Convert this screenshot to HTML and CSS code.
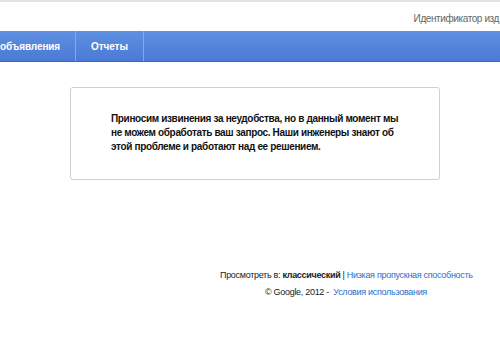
FILE: index.html
```html
<!DOCTYPE html>
<html lang="ru">
<head>
<meta charset="utf-8">
<link rel="stylesheet" href="styles.css">
</head>
<body>
<div class="page">
  <header class="top">
    <span class="pubid">Идентификатор изд</span>
  </header>
  <nav class="nav">
    <a class="nav-item first">объявления</a>
    <a class="nav-item">Отчеты</a>
  </nav>
  <main class="main">
    <div class="error-box">
      <p class="error-text">Приносим извинения за неудобства, но в данный момент мы<br>не можем обработать ваш запрос. Наши инженеры знают об<br>этой проблеме и работают над ее решением.</p>
    </div>
  </main>
  <footer class="footer">
    <div class="foot-line">Просмотреть в: <b>классический</b> | <a class="link">Низкая пропускная способность</a></div>
    <div class="foot-line">© Google, 2012 - &nbsp;<a class="link">Условия использования</a></div>
  </footer>
</div>
</body>
</html>
```
FILE: styles.css
```css
html, body {
  margin: 0;
  padding: 0;
  background: #fff;
}
body {
  width: 500px;
  height: 342px;
  overflow: hidden;
  font-family: "Liberation Sans", Arial, sans-serif;
}
.page {
  width: 500px;
}
.top {
  height: 31px;
  border-top: 2px solid #e3e3e3;
  box-sizing: border-box;
  display: flex;
  justify-content: flex-end;
  align-items: flex-start;
  padding-top: 11px;
}
.pubid {
  flex-shrink: 0;
  font-size: 10px;
  color: #666;
  line-height: 11px;
  letter-spacing: -0.4px;
  white-space: nowrap;
  margin-right: 1px;
}
.nav {
  height: 31px;
  box-sizing: border-box;
  background: linear-gradient(#5e90e2, #4a7ad4);
  border-bottom: 1px solid #3d68bd;
  display: flex;
}
.nav-item {
  display: flex;
  align-items: center;
  padding: 1px 15px 0;
  color: #fff;
  font-weight: bold;
  font-size: 10px;
  letter-spacing: -0.1px;
  border-right: 1px solid #86a8ea;
}
.nav-item.first {
  padding-left: 0;
}
.main {
  padding: 25px 0 0 70px;
}
.error-box {
  width: 370px;
  height: 93px;
  box-sizing: border-box;
  border: 1px solid #cfcfcf;
  border-radius: 3px;
  padding: 24px 0 0 40px;
}
.error-text {
  margin: 0;
  font-size: 10px;
  line-height: 14px;
  font-weight: bold;
  letter-spacing: -0.35px;
  color: #111;
  white-space: nowrap;
}
.footer {
  margin-top: 87px;
  padding-left: 220px;
  width: 252px;
  font-size: 9px;
  letter-spacing: -0.3px;
  color: #222;
  text-align: center;
}
.foot-line {
  line-height: 17px;
  white-space: nowrap;
}
.link {
  color: #2a6ec8;
}
```
